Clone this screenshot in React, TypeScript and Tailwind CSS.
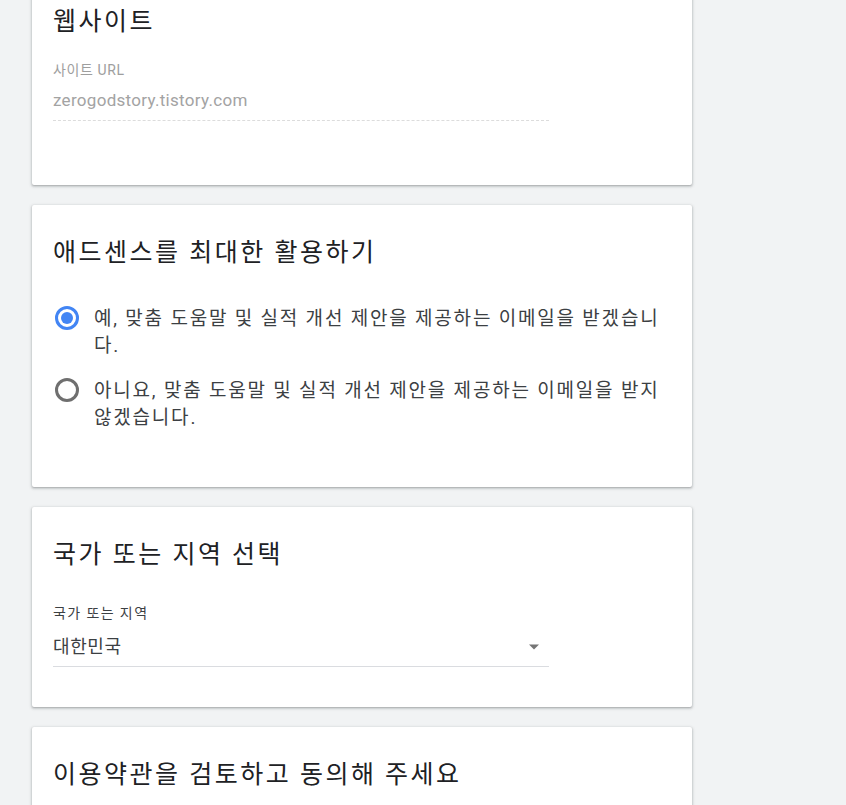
import React from "react";

const font = { fontFamily: 'Roboto, "Noto Sans CJK KR", sans-serif' };

function Card({ children, className = "" }: { children: React.ReactNode; className?: string }) {
  return (
    <div
      className={`w-[660px] bg-white rounded-[2px] shadow-[0_1px_2px_rgba(60,64,67,0.3),0_1px_3px_1px_rgba(60,64,67,0.15)] px-[21px] pt-[32px] ${className}`}
    >
      {children}
    </div>
  );
}

function Heading({ children }: { children: React.ReactNode }) {
  return (
    <h2 className="text-[25px] leading-[32px] tracking-[2.5px] text-[#202124] font-normal">{children}</h2>
  );
}

function Radio({ checked, children }: { checked: boolean; children: React.ReactNode }) {
  return (
    <label className="flex items-start">
      <span className="w-[26px] h-[26px] flex items-center justify-center ml-[1px] shrink-0">
        {checked ? (
          <span className="w-[24px] h-[24px] rounded-full border-[3px] border-[#4285f4] flex items-center justify-center">
            <span className="w-[12px] h-[12px] rounded-full bg-[#4285f4]" />
          </span>
        ) : (
          <span className="w-[24px] h-[24px] rounded-full border-[3px] border-[#6f6f6f]" />
        )}
      </span>
      <span className="ml-[14px] w-[572px] text-[19px] leading-[27px] tracking-[1.8px] text-[#3c4043]">
        {children}
      </span>
    </label>
  );
}

export default function App() {
  return (
    <div className="h-[805px] bg-[#f1f3f4] overflow-hidden" style={font}>
      <div className="pl-[32px] flex flex-col gap-[20px] -mt-[26px]">
        <Card className="pb-[64px]">
          <Heading>웹사이트</Heading>
          <div className="mt-[24px] w-[496px]">
            <div className="text-[14px] leading-[16px] tracking-[0.6px] text-[#9e9e9e]">사이트 URL</div>
            <div className="mt-[10px] text-[17px] leading-[24px] tracking-[0.3px] text-[#a3a3a3] pb-[8px] border-b border-dashed border-[#dcdcdc]">
              zerogodstory.tistory.com
            </div>
          </div>
        </Card>

        <Card className="pb-[56px]">
          <Heading>애드센스를 최대한 활용하기</Heading>
          <div className="mt-[36px] flex flex-col gap-[18px]">
            <Radio checked>예, 맞춤 도움말 및 실적 개선 제안을 제공하는 이메일을 받겠습니다.</Radio>
            <Radio checked={false}>아니요, 맞춤 도움말 및 실적 개선 제안을 제공하는 이메일을 받지 않겠습니다.</Radio>
          </div>
        </Card>

        <Card className="pb-[40px]">
          <Heading>국가 또는 지역 선택</Heading>
          <div className="mt-[34px] w-[496px]">
            <div className="text-[14px] leading-[16px] tracking-[1.4px] text-[#3c4043]">국가 또는 지역</div>
            <div className="mt-[14px] flex items-center justify-between pb-[7px] border-b border-[#dadce0]">
              <span className="text-[18px] leading-[24px] tracking-[0.6px] text-[#3c4043]">대한민국</span>
              <svg width="14" height="8" viewBox="0 0 14 8" className="mr-[8px]">
                <path d="M2 1.5h10L7 6.5z" fill="#757575" />
              </svg>
            </div>
          </div>
        </Card>

        <Card className="pb-[40px]">
          <Heading>이용약관을 검토하고 동의해 주세요</Heading>
          <div className="h-[60px]" />
        </Card>
      </div>
    </div>
  );
}
